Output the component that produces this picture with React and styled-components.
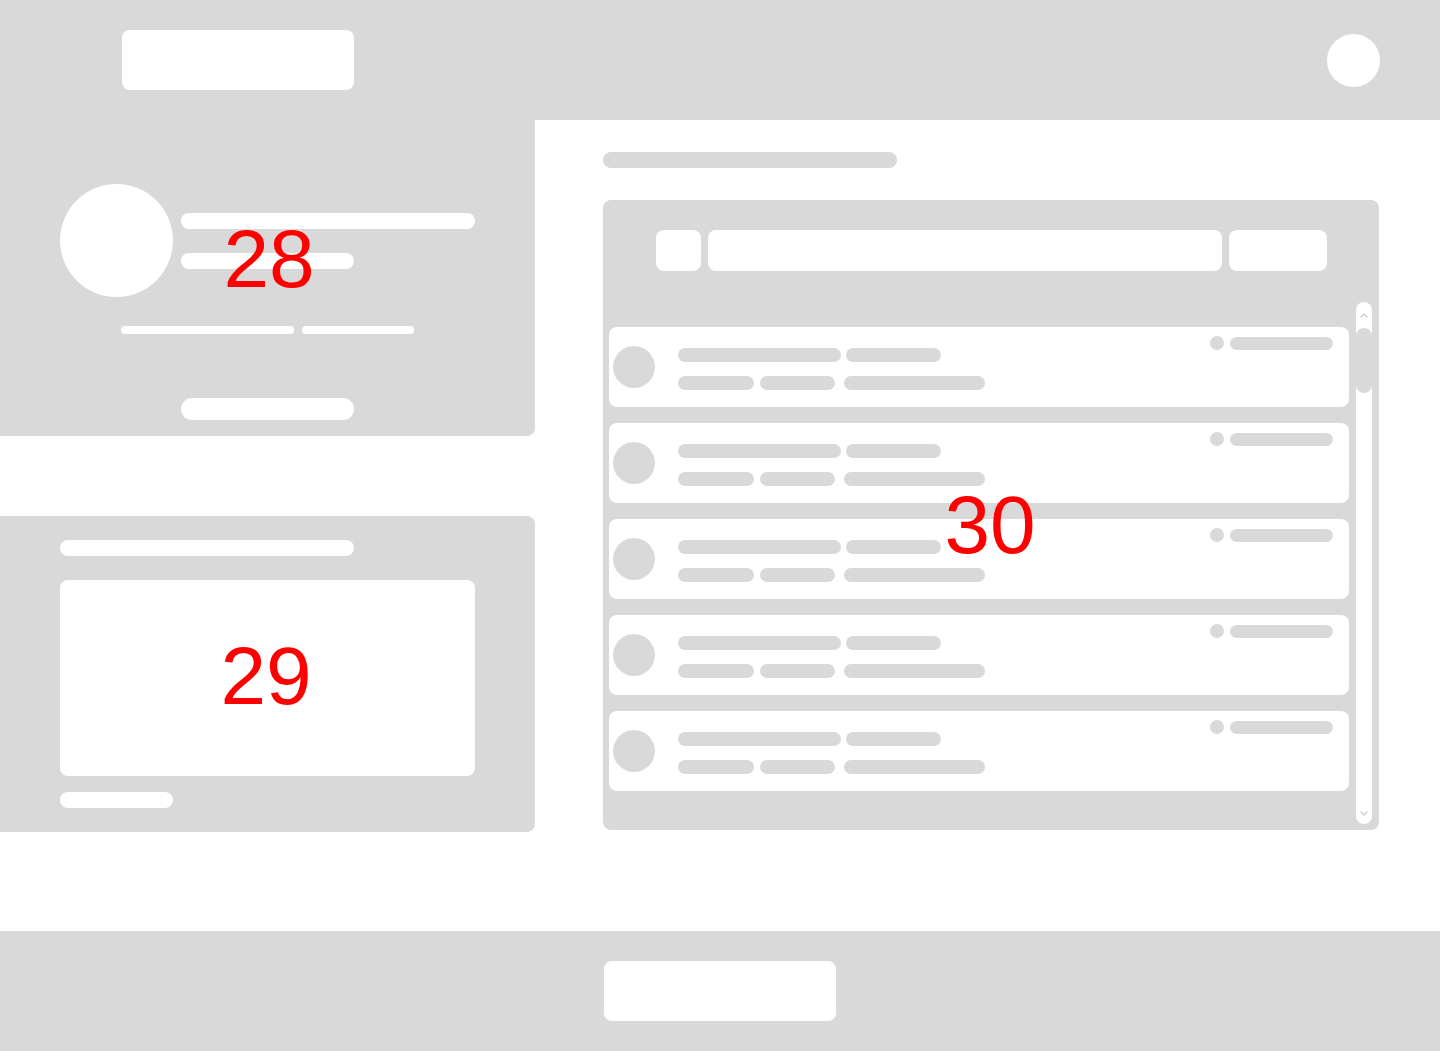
import React from "react";
import styled, { createGlobalStyle } from "styled-components";

const GRAY = "#d9d9d9";

const GlobalStyle = createGlobalStyle`
  * { box-sizing: border-box; }
  body {
    margin: 0;
    background: #fff;
    font-family: "Liberation Sans", Arial, sans-serif;
  }
`;

const Page = styled.div`
  width: 1440px;
  height: 1051px;
  display: flex;
  flex-direction: column;
  background: #fff;
`;

const Header = styled.header`
  height: 120px;
  flex-shrink: 0;
  background: ${GRAY};
  display: flex;
  align-items: center;
  justify-content: space-between;
  padding: 0 60px 0 122px;
`;

const Block = styled.div`
  width: ${(p) => p.$w}px;
  height: ${(p) => p.$h}px;
  background: #fff;
  border-radius: 8px;
`;

const Avatar = styled.div`
  width: 53px;
  height: 53px;
  border-radius: 50%;
  background: #fff;
`;

const Main = styled.main`
  flex: 1;
  display: flex;
`;

const LeftCol = styled.div`
  width: 535px;
  display: flex;
  flex-direction: column;
  gap: 80px;
`;

const Card = styled.section`
  position: relative;
  height: 316px;
  background: ${GRAY};
  border-radius: ${(p) => (p.$flatTop ? "0 0 8px 0" : "0 8px 8px 0")};
  display: flex;
  flex-direction: column;
  padding: ${(p) => p.$pad};
`;

const Bar = styled.div`
  width: ${(p) => p.$w}px;
  height: ${(p) => p.$h || 16}px;
  border-radius: ${(p) => (p.$h || 16) / 2}px;
  background: ${(p) => (p.$gray ? GRAY : "#fff")};
  flex-shrink: 0;
  margin-left: ${(p) => p.$ml || 0}px;
`;

const ProfileRow = styled.div`
  display: flex;
  align-items: center;
  gap: 8px;
  margin-left: 60px;
`;

const BigCircle = styled.div`
  width: 113px;
  height: 113px;
  border-radius: 50%;
  background: #fff;
`;

const Stack = styled.div`
  display: flex;
  flex-direction: column;
  gap: ${(p) => p.$gap}px;
`;

const Row = styled.div`
  display: flex;
  gap: ${(p) => p.$gap || 8}px;
  margin: ${(p) => p.$m || 0};
`;

const Annotation = styled.span`
  position: absolute;
  left: ${(p) => p.$x}px;
  top: ${(p) => p.$y}px;
  transform: translate(-50%, -50%);
  color: #ff0000;
  font-size: 82px;
  line-height: 1;
  font-family: "Liberation Sans", Arial, sans-serif;
  pointer-events: none;
`;

const Preview = styled.div`
  width: 415px;
  height: 196px;
  background: #fff;
  border-radius: 8px;
  margin: 24px 0 16px;
`;

const RightCol = styled.div`
  position: relative;
  flex: 1;
  display: flex;
  flex-direction: column;
  padding: 32px 61px 0 68px;
  gap: 32px;
`;

const Panel = styled.div`
  height: 630px;
  background: ${GRAY};
  border-radius: 8px;
  display: flex;
  flex-direction: column;
  padding: 30px 7px 6px 6px;
`;

const SearchRow = styled.div`
  display: flex;
  gap: 7px;
  height: 41px;
  margin: 0 45px 0 47px;
`;

const SearchField = styled.div`
  flex: 1;
  background: #fff;
  border-radius: 8px;
`;

const ListArea = styled.div`
  flex: 1;
  display: flex;
  gap: 7px;
  margin-top: 31px;
`;

const Items = styled.div`
  flex: 1;
  display: flex;
  flex-direction: column;
  gap: 16px;
  padding-top: 25px;
`;

const Item = styled.div`
  height: 80px;
  background: #fff;
  border-radius: 8px;
  display: flex;
  align-items: center;
  padding: 0 16px 0 4px;
`;

const ItemAvatar = styled.div`
  width: 42px;
  height: 42px;
  border-radius: 50%;
  background: ${GRAY};
  flex-shrink: 0;
`;

const ItemText = styled.div`
  display: flex;
  flex-direction: column;
  gap: 14px;
  margin: 4px 0 0 23px;
  flex: 1;
`;

const Meta = styled.div`
  align-self: flex-start;
  margin-top: 9px;
  display: flex;
  align-items: center;
  gap: 6px;
`;

const Dot = styled.div`
  width: 14px;
  height: 14px;
  border-radius: 50%;
  background: ${GRAY};
`;

const Track = styled.div`
  width: 16px;
  background: #fff;
  border-radius: 8px;
  display: flex;
  flex-direction: column;
  align-items: center;
  overflow: hidden;
`;

const ArrowCell = styled.div`
  height: ${(p) => p.$h}px;
  display: flex;
  align-items: center;
  justify-content: center;
  flex-shrink: 0;
`;

const Thumb = styled.div`
  width: 16px;
  height: 65px;
  border-radius: 8px;
  background: ${GRAY};
  flex-shrink: 0;
`;

const TrackFill = styled.div`
  flex: 1;
`;

const Footer = styled.footer`
  height: 120px;
  flex-shrink: 0;
  background: ${GRAY};
  display: flex;
  align-items: center;
  justify-content: center;
`;

const Chevron = ({ up }) => (
  <svg width="10" height="8" viewBox="0 0 10 8" fill="none">
    <path
      d={up ? "M2 6 L5 3 L8 6" : "M2 2 L5 5 L8 2"}
      stroke="#c8c8c8"
      strokeWidth="1.2"
      strokeLinecap="round"
      strokeLinejoin="round"
    />
  </svg>
);

const ListItem = () => (
  <Item>
    <ItemAvatar />
    <ItemText>
      <Row $gap={5}>
        <Bar $gray $w={163} $h={14} />
        <Bar $gray $w={95} $h={14} />
      </Row>
      <Row $gap={6}>
        <Bar $gray $w={76} $h={14} />
        <Bar $gray $w={75} $h={14} />
        <Bar $gray $w={141} $h={14} $ml={3} />
      </Row>
    </ItemText>
    <Meta>
      <Dot />
      <Bar $gray $w={103} $h={13} />
    </Meta>
  </Item>
);

export default function App() {
  const items = [1, 2, 3, 4, 5];
  return (
    <>
      <GlobalStyle />
      <Page>
        <Header>
          <Block $w={232} $h={60} />
          <Avatar />
        </Header>

        <Main>
          <LeftCol>
            <Card $flatTop $pad="64px 0 16px">
              <ProfileRow>
                <BigCircle />
                <Stack $gap={24}>
                  <Bar $w={294} />
                  <Bar $w={173} />
                </Stack>
              </ProfileRow>
              <Row $m="29px 0 0 121px">
                <Bar $w={173} $h={8} />
                <Bar $w={112} $h={8} />
              </Row>
              <Row $m="64px 0 0 181px">
                <Bar $w={173} $h={22} />
              </Row>
              <Annotation $x={269} $y={139}>28</Annotation>
            </Card>

            <Card $pad="24px 60px">
              <Bar $w={294} />
              <Preview />
              <Bar $w={113} />
              <Annotation $x={266} $y={160}>29</Annotation>
            </Card>
          </LeftCol>

          <RightCol>
            <Bar $gray $w={294} />
            <Panel>
              <SearchRow>
                <Block $w={45} $h={41} />
                <SearchField />
                <Block $w={98} $h={41} />
              </SearchRow>
              <ListArea>
                <Items>
                  {items.map((i) => (
                    <ListItem key={i} />
                  ))}
                </Items>
                <Track>
                  <ArrowCell $h={26}>
                    <Chevron up />
                  </ArrowCell>
                  <Thumb />
                  <TrackFill />
                  <ArrowCell $h={20}>
                    <Chevron />
                  </ArrowCell>
                </Track>
              </ListArea>
            </Panel>
            <Annotation $x={455} $y={405}>30</Annotation>
          </RightCol>
        </Main>

        <Footer>
          <Block $w={232} $h={60} />
        </Footer>
      </Page>
    </>
  );
}
